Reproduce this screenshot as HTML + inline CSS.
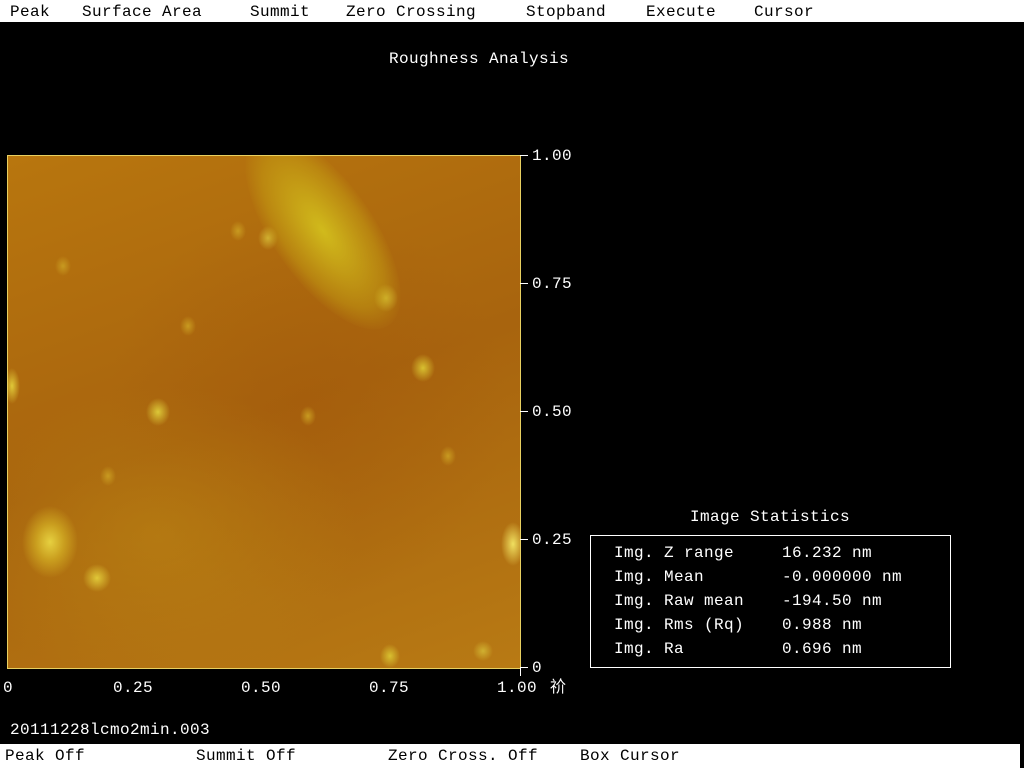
<!DOCTYPE html>
<html><head><meta charset="utf-8"><style>
body{margin:0;width:1024px;height:768px;background:#000;position:relative;overflow:hidden;font-family:"Liberation Mono","Noto Sans CJK SC",monospace;font-size:16px;letter-spacing:0.4px;color:#fff}
.t{position:absolute;white-space:pre;line-height:16px}
.k{color:#000}
#bar1{position:absolute;left:0;top:0;width:1024px;height:22px;background:#fff}
#bar2{position:absolute;left:0;top:744px;width:1020px;height:24px;background:#fff}
#img{position:absolute;left:7px;top:155px;width:512px;height:512px;border:1px solid #e8d060;overflow:hidden;
background:
radial-gradient(ellipse 28px 36px at 42px 386px,#e6d040,rgba(220,190,40,.6) 50%,transparent 100%),
radial-gradient(ellipse 14px 14px at 89px 422px,#e0c838,transparent),
radial-gradient(ellipse 12px 14px at 150px 256px,#dcc838,transparent),
radial-gradient(ellipse 12px 14px at 415px 212px,#d8c030,transparent),
radial-gradient(ellipse 12px 22px at 505px 388px,#f0e060,transparent),
radial-gradient(ellipse 12px 14px at 378px 142px,#d0b030,transparent),
radial-gradient(ellipse 10px 12px at 260px 82px,#d0b030,transparent),
radial-gradient(ellipse 10px 12px at 382px 500px,#d8c030,transparent),
radial-gradient(ellipse 8px 18px at 4px 230px,#e0c838,transparent),
radial-gradient(ellipse 10px 10px at 475px 495px,#d0b030,transparent),
radial-gradient(ellipse 8px 10px at 55px 110px,#c89a20,transparent),
radial-gradient(ellipse 8px 10px at 230px 75px,#c89a20,transparent),
radial-gradient(ellipse 8px 10px at 100px 320px,#c89a20,transparent),
radial-gradient(ellipse 8px 10px at 300px 260px,#c89a20,transparent),
radial-gradient(ellipse 8px 10px at 440px 300px,#c89a20,transparent),
radial-gradient(ellipse 8px 10px at 180px 170px,#c89a20,transparent),
radial-gradient(ellipse 200px 150px at 150px 380px,rgba(190,140,20,.45),transparent),
radial-gradient(ellipse 200px 200px at 300px 250px,rgba(160,85,10,.4),transparent),
linear-gradient(160deg,#b8760e,#a8640e 50%,#b87a14);}
#streak{position:absolute;left:265px;top:-40px;width:100px;height:230px;border-radius:50%;transform:rotate(-35deg);background:radial-gradient(ellipse at center,rgba(215,200,30,.85),rgba(200,170,20,.4) 55%,transparent 72%)}
.tk{position:absolute;background:#fff}
</style></head><body>
<div id="bar1"></div>
<div class="t k" style="left:10px;top:4px">Peak</div>
<div class="t k" style="left:82px;top:4px">Surface Area</div>
<div class="t k" style="left:250px;top:4px">Summit</div>
<div class="t k" style="left:346px;top:4px">Zero Crossing</div>
<div class="t k" style="left:526px;top:4px">Stopband</div>
<div class="t k" style="left:646px;top:4px">Execute</div>
<div class="t k" style="left:754px;top:4px">Cursor</div>
<div class="t" style="left:389px;top:51px">Roughness Analysis</div>
<div id="img"><div id="streak"></div></div>
<div class="tk" style="left:520px;top:155px;width:8px;height:1px"></div>
<div class="tk" style="left:520px;top:283px;width:8px;height:1px"></div>
<div class="tk" style="left:520px;top:411px;width:8px;height:1px"></div>
<div class="tk" style="left:520px;top:539px;width:8px;height:1px"></div>
<div class="tk" style="left:520px;top:667px;width:8px;height:1px"></div>
<div class="tk" style="left:520px;top:668px;width:1px;height:8px"></div>
<div class="t" style="left:532px;top:148px">1.00</div>
<div class="t" style="left:532px;top:276px">0.75</div>
<div class="t" style="left:532px;top:404px">0.50</div>
<div class="t" style="left:532px;top:532px">0.25</div>
<div class="t" style="left:532px;top:660px">0</div>
<div class="t" style="left:3px;top:680px">0</div>
<div class="t" style="left:113px;top:680px">0.25</div>
<div class="t" style="left:241px;top:680px">0.50</div>
<div class="t" style="left:369px;top:680px">0.75</div>
<div class="t" style="left:497px;top:680px">1.00</div>
<div class="t" style="left:550px;top:680px">祄</div>
<div class="t" style="left:690px;top:509px">Image Statistics</div>
<div style="position:absolute;left:590px;top:535px;width:359px;height:131px;border:1px solid #fff"></div>
<div class="t" style="left:614px;top:545px">Img. Z range</div><div class="t" style="left:782px;top:545px">16.232 nm</div>
<div class="t" style="left:614px;top:569px">Img. Mean</div><div class="t" style="left:782px;top:569px">-0.000000 nm</div>
<div class="t" style="left:614px;top:593px">Img. Raw mean</div><div class="t" style="left:782px;top:593px">-194.50 nm</div>
<div class="t" style="left:614px;top:617px">Img. Rms (Rq)</div><div class="t" style="left:782px;top:617px">0.988 nm</div>
<div class="t" style="left:614px;top:641px">Img. Ra</div><div class="t" style="left:782px;top:641px">0.696 nm</div>
<div class="t" style="left:10px;top:722px">20111228lcmo2min.003</div>
<div id="bar2"></div>
<div class="t k" style="left:5px;top:748px">Peak Off</div>
<div class="t k" style="left:196px;top:748px">Summit Off</div>
<div class="t k" style="left:388px;top:748px">Zero Cross. Off</div>
<div class="t k" style="left:580px;top:748px">Box Cursor</div>
</body></html>
